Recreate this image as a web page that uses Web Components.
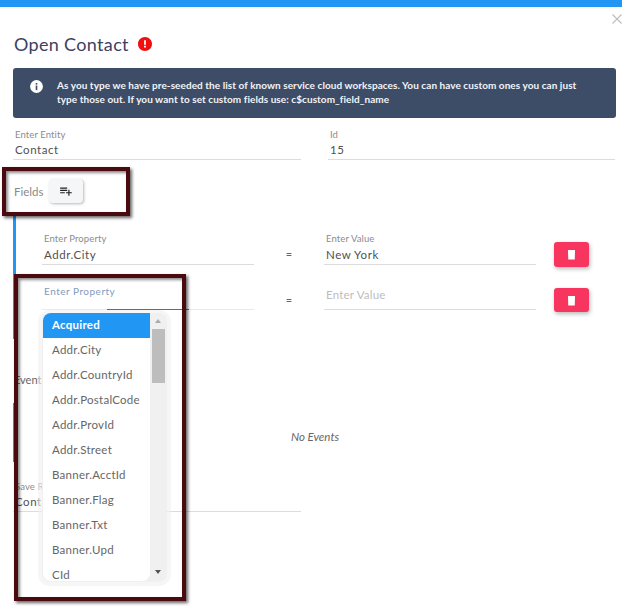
<!DOCTYPE html>
<html>
<head>
<meta charset="utf-8">
<title>Open Contact</title>
<style>
  html, body { margin: 0; padding: 0; background: #fff; }
  body { font-family: Lato, "Open Sans", sans-serif; color: #444; width: 622px; height: 609px; overflow: hidden; }
</style>
</head>
<body>
<template id="modal-tpl">
  <style>
    :host { display: block; position: relative; height: 609px; box-sizing: border-box; border-top: 7px solid #2196f3; padding: 0 6px 0 13px; overflow: hidden; }
    .close { position: absolute; right: 0; top: 7px; width: 10px; height: 10px; }
    .title { display: flex; align-items: center; gap: 9px; height: 34px; margin: 20px 0 0 1px; font-size: 18px; letter-spacing: .33px; color: #3c3f63; }
    .title svg { width: 14px; height: 14px; }
    .two { display: grid; grid-template-columns: 288px 287px; column-gap: 27px; margin-top: 10px; }
    .fields { display: flex; align-items: center; gap: 6px; height: 24px; margin: 19px 0 0 1px; font-size: 11.5px; color: #8a8a8a; }
    .list { margin-top: 12px; border-left: 3px solid #2196f3; height: 124px; box-sizing: border-box; padding: 17px 0 0 26px; }
    .events-label { margin: 34px 0 0 1px; height: 14px; font-size: 11px; line-height: 14px; color: #666; }
    .events { margin-top: 16px; border-left: 3px solid #2196f3; height: 59px; display: flex; justify-content: center; align-items: center; padding: 8px 2px 0 0; box-sizing: border-box; font-size: 11.5px; font-style: italic; color: #666; width: 603px; }
    .save { width: 288px; margin-top: 18px; }
  </style>
  <button-close class="close"></button-close>
  <div class="title"><span>Open Contact</span>
    <svg viewBox="2 2 20 20"><path fill="#f01010" d="M12 2C6.48 2 2 6.48 2 12s4.48 10 10 10 10-4.48 10-10S17.52 2 12 2zm1.3 15h-2.6v-2.4h2.6V17zm0-4h-2.6V6.8h2.6V13z"/></svg>
  </div>
  <info-alert>As you type we have pre-seeded the list of known service cloud workspaces. You can have custom ones you can just type those out. If you want to set custom fields use: c$custom_field_name</info-alert>
  <div class="two">
    <text-field label="Enter Entity" value="Contact"></text-field>
    <text-field label="Id" value="15"></text-field>
  </div>
  <div class="fields"><span>Fields</span><add-button></add-button></div>
  <div class="list">
    <field-row property="Addr.City" val="New York"></field-row>
    <field-row focused></field-row>
  </div>
  <div class="events-label">Events</div>
  <div class="events">No Events</div>
  <div class="save"><text-field label="Save Response" value="Contact"></text-field></div>
</template>

<template id="close-tpl">
  <style>:host { display: block; } svg { display: block; width: 10px; height: 10px; }</style>
  <svg viewBox="0 0 10 10"><path d="M.5.5l9 9M9.5.5l-9 9" stroke="#bdbdbd" stroke-width="1.1" fill="none"/></svg>
</template>

<template id="alert-tpl">
  <style>
    :host { display: flex; align-items: flex-start; box-sizing: border-box; width: 603px; height: 50px; margin-top: 7px; padding: 10px 30px 0 17px; border-radius: 3px; background: #3d4d68; color: #f2f4f7; font-size: 10px; font-weight: 700; line-height: 14.3px; letter-spacing: .06px; }
    svg { flex: none; width: 13px; height: 13px; margin: 2px 14px 0 0; }
  </style>
  <svg viewBox="0 0 13 13"><circle cx="6.5" cy="6.5" r="6.4" fill="#fff"/><rect x="5.7" y="5.5" width="1.6" height="4.6" fill="#3d4d68"/><rect x="5.7" y="3" width="1.6" height="1.6" fill="#3d4d68"/></svg>
  <div><slot></slot></div>
</template>

<template id="field-tpl">
  <style>
    :host { display: block; box-sizing: border-box; height: 32px; padding: 0 2px; border-bottom: 1px solid #dcdcdc; position: relative; }
    .lab { display: block; height: 14px; line-height: 14px; font-size: 9.5px; color: #8c8c8c; letter-spacing: .1px; }
    .val { display: block; height: 16px; line-height: 16px; font-size: 11.5px; color: #505050; letter-spacing: .55px; }
    :host([tall]) { height: 33px; }
    :host([tall]) .val { margin-top: 1px; }
    :host([placeholder]) { height: 33px; }
    :host([placeholder]) .lab { display: none; }
    :host([placeholder]) .val { color: #bdbdbd; letter-spacing: .2px; margin-top: 10px; }
    :host([focused]) { height: 33px; border-bottom-color: #e3eaf2; }
    :host([focused]) .lab { color: #7d9cbd; letter-spacing: .5px; font-size: 10px; margin-top: 7px; }
    :host([focused])::after { content: ""; position: absolute; left: 65px; top: 32px; width: 82px; height: 1px; background: #2f78bd; }
  </style>
  <span class="lab"></span><span class="val"></span>
</template>

<template id="row-tpl">
  <style>
    :host { display: grid; grid-template-columns: 212px 70px 212px 18px 35px; align-items: start; height: 45px; }
    .eq { grid-column: 2; text-align: center; font-size: 11px; color: #666; padding-top: 15px; }
    :host([focused]) .eq { padding-top: 16px; }
    del-button { grid-column: 5; margin-top: 10px; }
    :host([focused]) del-button { margin-top: 11px; height: 24px; }
  </style>
  <text-field id="p"></text-field>
  <div class="eq">=</div>
  <text-field id="v"></text-field>
  <del-button></del-button>
</template>

<template id="add-tpl">
  <style>
    :host { display: flex; align-items: center; justify-content: center; width: 34px; height: 24px; border-radius: 4px; background: #f5f6f8; box-shadow: 1px 1px 3px rgba(0,0,0,.28); }
    svg { width: 14px; height: 14px; }
  </style>
  <svg viewBox="0 0 24 24"><path fill="#222" d="M14 10H2v2h12v-2zm0-4H2v2h12V6zm4 8v-4h-2v4h-4v2h4v4h2v-4h4v-2h-4zM2 16h8v-2H2v2z"/></svg>
</template>

<template id="del-tpl">
  <style>
    :host { display: flex; align-items: center; justify-content: center; width: 35px; height: 25px; border-radius: 3px; background: #f8355f; box-shadow: 1px 2px 4px rgba(0,0,0,.28); }
    svg { width: 13px; height: 13px; }
  </style>
  <svg viewBox="0 0 24 24"><path fill="#fff" d="M5.5 3.5h13l-.5 17.5H6z"/></svg>
</template>

<template id="menu-tpl">
  <style>
    :host { display: block; position: absolute; left: 38px; top: 310px; width: 133px; height: 276px; box-sizing: border-box; border: 4px solid rgba(240,240,240,.6); border-radius: 12px; }
    .wrap { display: flex; box-sizing: border-box; height: 269px; margin-top: -1px; padding-left: 1px; background: #f0f0f0; border-radius: 8px; }
    ul { list-style: none; margin: 0; padding: 0; width: 107px; height: 268px; overflow: hidden; background: #fff; border-radius: 8px 0 8px 8px; }
    .bar { width: 13px; margin-left: 2px; position: relative; }
    .thumb { position: absolute; left: 0; top: 16px; width: 13px; height: 54px; background: #bdbdbd; }
    .up, .down { position: absolute; left: 3px; width: 0; height: 0; border-left: 3.5px solid transparent; border-right: 3.5px solid transparent; }
    .up { top: 6px; border-bottom: 4px solid #aaa; }
    .down { bottom: 8px; border-top: 4px solid #555; }
  </style>
  <div class="wrap"><ul><slot></slot></ul><div class="bar"><div class="up"></div><div class="thumb"></div><div class="down"></div></div></div>
</template>

<template id="item-tpl">
  <style>
    :host { display: block; box-sizing: border-box; height: 25px; line-height: 24px; padding-left: 9px; font-size: 11.5px; color: #666; letter-spacing: .25px; }
    :host([active]) { background: #2196f3; color: #fff; font-weight: 700; }
  </style>
  <slot></slot>
</template>

<template id="note-tpl">
  <style>
    :host { display: block; position: absolute; box-sizing: border-box; border: 4px solid #4a0a10; box-shadow: 2px 2px 3px rgba(0,0,0,.6), inset 2px 2px 3px rgba(0,0,0,.45); pointer-events: none; }
  </style>
</template>

<contact-modal></contact-modal>
<menu-list>
  <menu-item active>Acquired</menu-item>
  <menu-item>Addr.City</menu-item>
  <menu-item>Addr.CountryId</menu-item>
  <menu-item>Addr.PostalCode</menu-item>
  <menu-item>Addr.ProvId</menu-item>
  <menu-item>Addr.Street</menu-item>
  <menu-item>Banner.AcctId</menu-item>
  <menu-item>Banner.Flag</menu-item>
  <menu-item>Banner.Txt</menu-item>
  <menu-item>Banner.Upd</menu-item>
  <menu-item>CId</menu-item>
</menu-list>
<note-box style="left:2px;top:167px;width:128px;height:49px"></note-box>
<note-box style="left:14px;top:274px;width:172px;height:327px"></note-box>

<script>
// small helper so every element just clones its own template
function stamp(el, id) {
  el.attachShadow({ mode: "open" });
  el.shadowRoot.appendChild(document.getElementById(id).content.cloneNode(true));
}

function plain(tag, id) {
  customElements.define(tag, class extends HTMLElement {
    constructor() {
      super();
      stamp(this, id);
    }
  });
}

class TextField extends HTMLElement {
  constructor() {
    super();
    stamp(this, "field-tpl");
  }

  connectedCallback() { this.render(); }

  static get observedAttributes() { return ["label", "value"]; }

  attributeChangedCallback() { this.render(); }

  render() {
    this.shadowRoot.querySelector(".lab").textContent = this.getAttribute("label") || "";
    this.shadowRoot.querySelector(".val").textContent = this.getAttribute("value") || "";
  }
}

class FieldRow extends HTMLElement {
  constructor() {
    super();
    stamp(this, "row-tpl");
  }

  connectedCallback() {
    const p = this.shadowRoot.getElementById("p");
    const v = this.shadowRoot.getElementById("v");
    if (this.hasAttribute("focused")) {
      p.setAttribute("focused", "");
      p.setAttribute("label", "Enter Property");
      v.setAttribute("placeholder", "");
      v.setAttribute("value", "Enter Value");
    } else {
      p.setAttribute("tall", "");
      v.setAttribute("tall", "");
      p.setAttribute("label", "Enter Property");
      p.setAttribute("value", this.getAttribute("property"));
      v.setAttribute("label", "Enter Value");
      v.setAttribute("value", this.getAttribute("val"));
    }
  }
}

plain("button-close", "close-tpl");
plain("info-alert", "alert-tpl");
plain("add-button", "add-tpl");
plain("del-button", "del-tpl");
plain("menu-list", "menu-tpl");
plain("menu-item", "item-tpl");
plain("note-box", "note-tpl");
customElements.define("text-field", TextField);
customElements.define("field-row", FieldRow);
plain("contact-modal", "modal-tpl");
</script>
</body>
</html>
